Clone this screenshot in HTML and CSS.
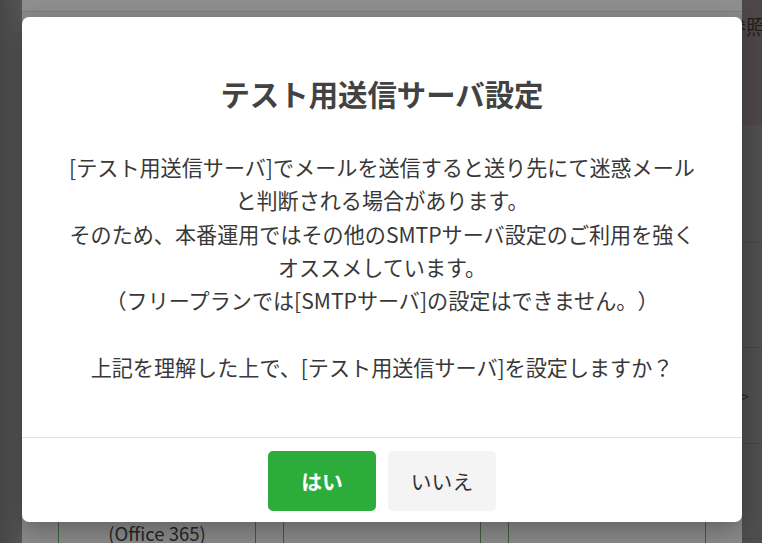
FILE: index.html
```html
<!DOCTYPE html>
<html lang="ja">
<head>
    <meta charset="UTF-8">
    <meta name="viewport" content="width=device-width, initial-scale=1.0">
    <title>テスト用送信サーバ設定</title>
    <link rel="stylesheet" href="styles.css">
</head>
<body>
    <!-- Page behind the dialog (already dimmed by the overlay) -->
    <div class="screen">
        <div class="side side-left"></div>

        <div class="sheet">
            <div class="sheet-top"></div>
            <div class="sheet-table">
                <div class="cell cell-edge"></div>
                <div class="cell cell-wide">(Office 365)</div>
                <div class="cell cell-narrow"></div>
                <div class="cell cell-wide"></div>
                <div class="cell cell-narrow"></div>
                <div class="cell cell-wide"></div>
                <div class="cell cell-last"></div>
            </div>
        </div>

        <div class="side side-right">
            <div class="side-head">参照</div>
            <div class="side-row row-1"></div>
            <div class="side-row row-2"></div>
            <div class="side-row row-3">&gt;</div>
            <div class="side-row row-4"></div>
        </div>
    </div>

    <!-- Confirm dialog -->
    <div class="dialog">
        <div class="dialog-body">
            <h2>テスト用送信サーバ設定</h2>
            <p>
                [テスト用送信サーバ]でメールを送信すると送り先にて迷惑メール<br>
                と判断される場合があります。<br>
                そのため、本番運用ではその他のSMTPサーバ設定のご利用を強く<br>
                オススメしています。<br>
                （フリープランでは[SMTPサーバ]の設定はできません。）<br>
                <br>
                上記を理解した上で、[テスト用送信サーバ]を設定しますか？
            </p>
        </div>
        <div class="dialog-footer">
            <button class="btn-yes">はい</button>
            <button class="btn-no">いいえ</button>
        </div>
    </div>
</body>
</html>
```

FILE: styles.css
```css
body {
    font-family: "Noto Sans CJK JP", "Noto Sans", sans-serif;
    margin: 0;
    padding: 0;
    background-color: #505050;
    overflow: hidden;
    text-spacing-trim: space-all;
}

.screen {
    display: flex;
    height: 100vh;
}

.side-left {
    width: 22px;
    background: linear-gradient(to right, #474747, #555555);
}

/* Dimmed panel behind the dialog */
.sheet {
    width: 720px;
    display: flex;
    flex-direction: column;
    background-color: #8b8b8b;
}

.sheet-top {
    height: 11px;
    background-color: #8f8f8f;
    border-bottom: 1px solid #7e7e7e;
}

.sheet-table {
    margin-top: auto;
    height: 60px;
    display: flex;
}

.cell {
    box-sizing: border-box;
    border-right: 1px solid #3c603c;
    padding-top: 37px;
    text-align: center;
    font-size: 18.5px;
    line-height: 26px;
    color: #262626;
}

.cell-edge { width: 37px; }
.cell-wide { width: 197px; }
.cell-narrow { width: 28px; }
.cell-last { width: 36px; border-right: none; }

.side-right {
    flex: 1;
    overflow: hidden;
    background-color: #4f4f4f;
    display: flex;
    flex-direction: column;
}

.side-head {
    height: 125px;
    background-color: #4d4847;
    font-size: 20px;
    line-height: 28px;
    padding-top: 13px;
    box-sizing: border-box;
    white-space: nowrap;
    text-indent: -16px;
    color: #1f1f1f;
}

.side-row {
    box-sizing: border-box;
    border-bottom: 1px solid #454545;
}

.row-1 { height: 118px; }
.row-2 { height: 105px; }
.row-4 { height: 95px; }

.row-3 {
    height: 96px;
    display: flex;
    align-items: center;
    font-size: 14px;
    color: #1f1f1f;
    text-indent: -1px;
}

/* Dialog */
.dialog {
    position: absolute;
    top: 17px;
    left: 22px;
    width: 720px;
    background: white;
    border-radius: 7px;
    box-shadow: 0 8px 26px rgba(0, 0, 0, 0.3);
}

.dialog-body {
    padding: 55px 30px 53px;
    text-align: center;
}

.dialog-body h2 {
    font-size: 29.4px;
    line-height: 43px;
    font-weight: bold;
    color: #424242;
    margin: 0 0 36px;
}

.dialog-body p {
    font-size: 21.1px;
    line-height: 33.28px;
    color: #383838;
    margin: 0;
}

.dialog-footer {
    border-top: 1px solid #e2e2e2;
    padding: 13px 0 11px;
    display: flex;
    justify-content: center;
    gap: 12px;
}

.dialog-footer button {
    width: 108px;
    height: 60px;
    border: none;
    border-radius: 5px;
    font-family: inherit;
    font-size: 20.8px;
    cursor: pointer;
}

.btn-yes {
    background-color: #2cac3b;
    color: white;
    font-weight: bold;
}

.btn-no {
    background-color: #f4f4f4;
    color: #333;
}
```
